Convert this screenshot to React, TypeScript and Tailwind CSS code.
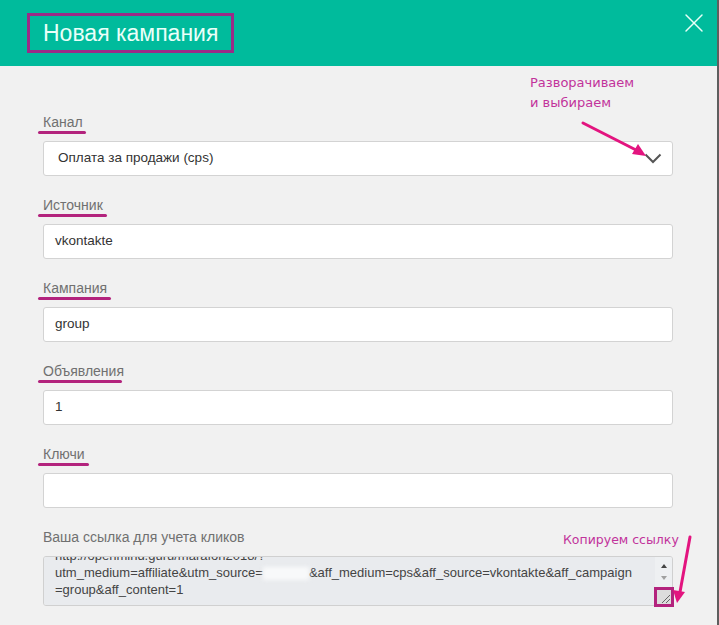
import { X } from 'lucide-react';

const fields = [
    { label: 'Источник', value: 'vkontakte', line: 'w-[69px]' },
    { label: 'Кампания', value: 'group', line: 'w-[73px]' },
    { label: 'Объявления', value: '1', line: 'w-[84px]' },
    { label: 'Ключи', value: '', line: 'w-[51px]' },
];

function Label({ text, line }: { text: string; line?: string }) {
    return (
        <div className="h-[20px] mb-[9px] leading-[20px]">
            <span className="relative inline-block text-[14px] text-[#707070]">
                {text}
                {line && (
                    <span className={`absolute left-[-5px] top-[19px] h-[3px] rounded-full bg-[#b3237d] ${line}`} />
                )}
            </span>
        </div>
    );
}

export default function App() {
    return (
        <div className="w-[719px] h-[625px] flex overflow-hidden font-['Liberation_Sans',Arial,sans-serif]">
            <div className="relative flex-1 flex flex-col bg-[#f1f1f1]">
                <div className="h-[66px] shrink-0 bg-[#00bb9c] flex items-center justify-between pl-[27px] pr-[7px]">
                    <div className="h-[40px] border-[3px] border-[#9a2c87] px-[13px] flex items-center">
                        <span className="text-[23px] text-[#eafff9] leading-none">Новая кампания</span>
                    </div>
                    <X className="w-[32px] h-[32px] text-[#e8fff8] self-start mt-[7px]" strokeWidth={1.1} />
                </div>

                <div className="flex-1 pl-[43px] pr-[44px] pt-[46px]">
                    <Label text="Канал" line="w-[48px]" />
                    <div className="h-[35px] bg-white border border-[#d3d3d3] rounded-[3px] flex items-center justify-between pl-[14px] pr-[9px] text-[13.5px] text-[#333]">
                        <span>Оплата за продажи (cps)</span>
                        <svg width="18" height="11" viewBox="0 0 18 11" className="mr-[1px]">
                            <polyline points="1.5,1.5 9,9 16.5,1.5" fill="none" stroke="#555" strokeWidth="2" />
                        </svg>
                    </div>

                    {fields.map((f) => (
                        <div key={f.label} className="mt-[19px]">
                            <Label text={f.label} line={f.line} />
                            <div className="h-[35px] bg-white border border-[#d3d3d3] rounded-[3px] flex items-center pl-[11px] text-[13.5px] text-[#333]">
                                {f.value}
                            </div>
                        </div>
                    ))}

                    <div className="mt-[19px]">
                        <Label text="Ваша ссылка для учета кликов" />
                        <div className="h-[50px] flex border border-[#d0d0d0] rounded-[3px] overflow-hidden">
                            <div className="flex-1 bg-[#e9ebee] overflow-hidden pl-[11px] pr-[4px] text-[13px] leading-[17px] text-[#444]">
                                <div className="-mt-[10px]">
                                    <div>http://openmind.guru/marafon2018/?</div>
                                    <div className="whitespace-nowrap">
                                        utm_medium=affiliate&amp;utm_source=
                                        <span className="inline-block w-[46px] h-[13px] align-middle bg-[#f8f9fa] blur-[2px]" />
                                        &amp;aff_medium=cps&amp;aff_source=vkontakte&amp;aff_campaign
                                    </div>
                                    <div>=group&amp;aff_content=1</div>
                                </div>
                            </div>
                            <div className="w-[17px] bg-[#eef0f2] flex flex-col items-center pt-[6px]">
                                <svg width="8" height="6" viewBox="0 0 8 6">
                                    <path d="M4 1 L7 5 L1 5 Z" fill="#444" />
                                </svg>
                                <svg width="8" height="6" viewBox="0 0 8 6" className="mt-[6px]">
                                    <path d="M1 1 L7 1 L4 5 Z" fill="#a0a0a0" />
                                </svg>
                            </div>
                        </div>
                    </div>
                </div>

                {/* annotations */}
                <div className="absolute left-[530px] top-[73px] text-[13px] leading-[20px] text-[#c2339b] font-['DejaVu_Sans',sans-serif]">
                    <div>Разворачиваем</div>
                    <div>и выбираем</div>
                </div>
                <div className="absolute left-[563px] top-[531px] text-[12.5px] leading-[18px] text-[#c2339b] font-['DejaVu_Sans',sans-serif]">
                    Копируем ссылку
                </div>
                <div className="absolute left-[654px] top-[587px] w-[20px] h-[20px] border-[3px] border-[#b3237d] bg-[#dcdcdc]">
                    <svg width="14" height="14" viewBox="0 0 14 14" className="absolute right-0 bottom-0">
                        <path d="M5 13 L13 5 M9 13 L13 9" stroke="#666" strokeWidth="1" />
                    </svg>
                </div>
                <svg className="absolute left-0 top-0 pointer-events-none" width="717" height="625">
                    <line x1="583" y1="123" x2="638" y2="151" stroke="#e3147f" strokeWidth="3" strokeLinecap="round" />
                    <path d="M646 156 L632 154 L638 144 Z" fill="#e3147f" />
                    <line x1="690" y1="537" x2="680" y2="592" stroke="#e3147f" strokeWidth="3" strokeLinecap="round" />
                    <path d="M677 603 L673 590 L685 592 Z" fill="#e3147f" />
                </svg>
            </div>
            <div className="w-[2px] bg-[#5e5e5e]" />
        </div>
    );
}
